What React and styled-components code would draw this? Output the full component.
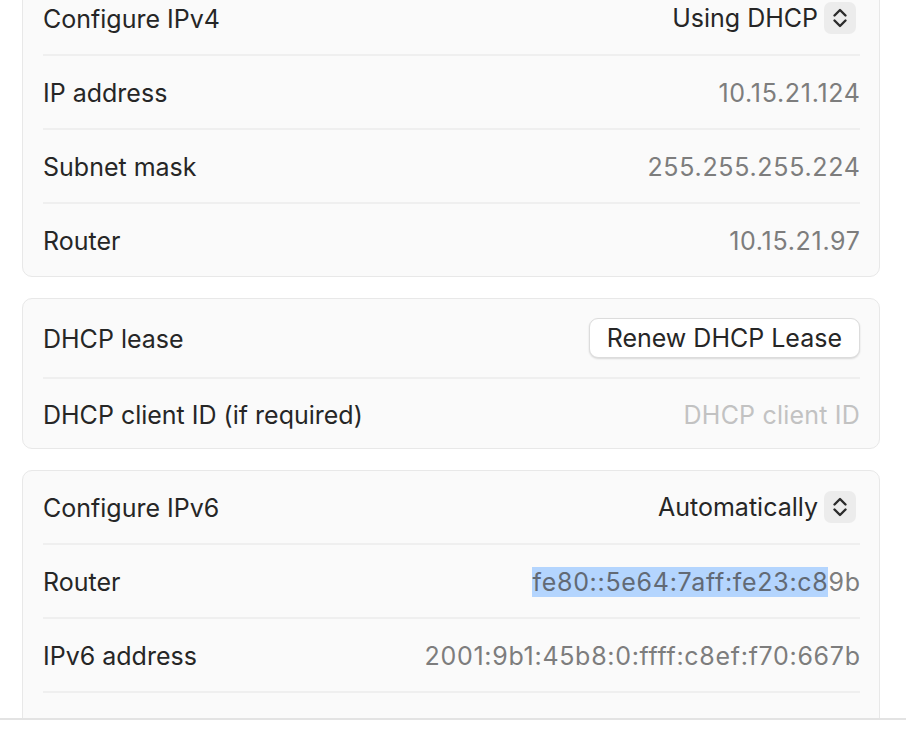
import React from 'react'
import styled, { createGlobalStyle } from 'styled-components'

const GlobalStyle = createGlobalStyle`
  html, body {
    margin: 0;
    padding: 0;
    background: #ffffff;
  }
  body {
    font-family: Inter, "Noto Sans", "Liberation Sans", sans-serif;
    -webkit-font-smoothing: antialiased;
  }
`

const Window = styled.div`
  display: flex;
  flex-direction: column;
  width: 906px;
  height: 730px;
  background: #ffffff;
`

const Viewport = styled.div`
  flex: 1;
  overflow: hidden;
`

// scroll position of the settings pane
const ScrollContent = styled.div`
  display: flex;
  flex-direction: column;
  gap: 21px;
  margin-top: -19px;
  padding: 0 26px 0 22px;
`

const Card = styled.section`
  background: #fafafa;
  border: 1px solid #e8e8e8;
  border-radius: 10px;
  padding: 0 19px 0 20px;
`

const Row = styled.div`
  display: flex;
  align-items: center;
  justify-content: space-between;
  min-height: ${(p) => p.$h || 72}px;
  & + & {
    border-top: 2px solid #efefef;
  }
`

const Label = styled.span`
  font-size: 25px;
  color: #262626;
  transform: translateY(1px);
`

const Value = styled.span`
  font-size: 25px;
  letter-spacing: ${(p) => (p.$placeholder ? '0.2px' : '0.7px')};
  margin-right: ${(p) => (p.$placeholder ? '0' : '-0.7px')};
  color: ${(p) => (p.$placeholder ? '#c2c2c2' : '#7d7d7d')};
  transform: translateY(1px);
`

const Selected = styled.span`
  background: #b4d5fe;
  color: #626a75;
`

const Popup = styled.div`
  display: flex;
  align-items: center;
  gap: 6px;
  margin-right: 4px;
  font-size: 25px;
  color: #262626;
`

const Stepper = styled.span`
  display: flex;
  align-items: center;
  justify-content: center;
  width: 32px;
  height: 32px;
  border-radius: 7px;
  background: #ececec;
`

const Button = styled.button`
  font-family: inherit;
  font-size: 25px;
  color: #262626;
  background: #ffffff;
  border: 1px solid #dcdcdc;
  border-radius: 9px;
  height: 40px;
  padding: 0 17px;
  box-shadow: 0 1px 2px rgba(0, 0, 0, 0.14);
`

const Footer = styled.div`
  height: 10px;
  border-top: 2px solid #e3e3e3;
  background: #ffffff;
`

function UpDown() {
  return (
    <svg width="32" height="32" viewBox="0 0 32 32" fill="none">
      <path d="M10.5 13.5 L16 8 L21.5 13.5" stroke="#2b2b2b" strokeWidth="2.4" strokeLinecap="round" strokeLinejoin="round" />
      <path d="M10.5 18.5 L16 24 L21.5 18.5" stroke="#2b2b2b" strokeWidth="2.4" strokeLinecap="round" strokeLinejoin="round" />
    </svg>
  )
}

function PopupValue({ children }) {
  return (
    <Popup>
      {children}
      <Stepper>
        <UpDown />
      </Stepper>
    </Popup>
  )
}

export default function App() {
  return (
    <Window>
      <GlobalStyle />
      <Viewport>
        <ScrollContent>
          <Card>
            <Row>
              <Label>Configure IPv4</Label>
              <PopupValue>Using DHCP</PopupValue>
            </Row>
            <Row>
              <Label>IP address</Label>
              <Value>10.15.21.124</Value>
            </Row>
            <Row>
              <Label>Subnet mask</Label>
              <Value>255.255.255.224</Value>
            </Row>
            <Row>
              <Label>Router</Label>
              <Value>10.15.21.97</Value>
            </Row>
          </Card>

          <Card>
            <Row $h={78}>
              <Label>DHCP lease</Label>
              <Button>Renew DHCP Lease</Button>
            </Row>
            <Row $h={69}>
              <Label>DHCP client ID (if required)</Label>
              <Value $placeholder>DHCP client ID</Value>
            </Row>
          </Card>

          <Card>
            <Row>
              <Label>Configure IPv6</Label>
              <PopupValue>Automatically</PopupValue>
            </Row>
            <Row>
              <Label>Router</Label>
              <Value>
                <Selected>fe80::5e64:7aff:fe23:c8</Selected>9b
              </Value>
            </Row>
            <Row>
              <Label>IPv6 address</Label>
              <Value>2001:9b1:45b8:0:ffff:c8ef:f70:667b</Value>
            </Row>
            <Row>
              <Label>Prefix length</Label>
              <Value>64</Value>
            </Row>
          </Card>
        </ScrollContent>
      </Viewport>
      <Footer />
    </Window>
  )
}
